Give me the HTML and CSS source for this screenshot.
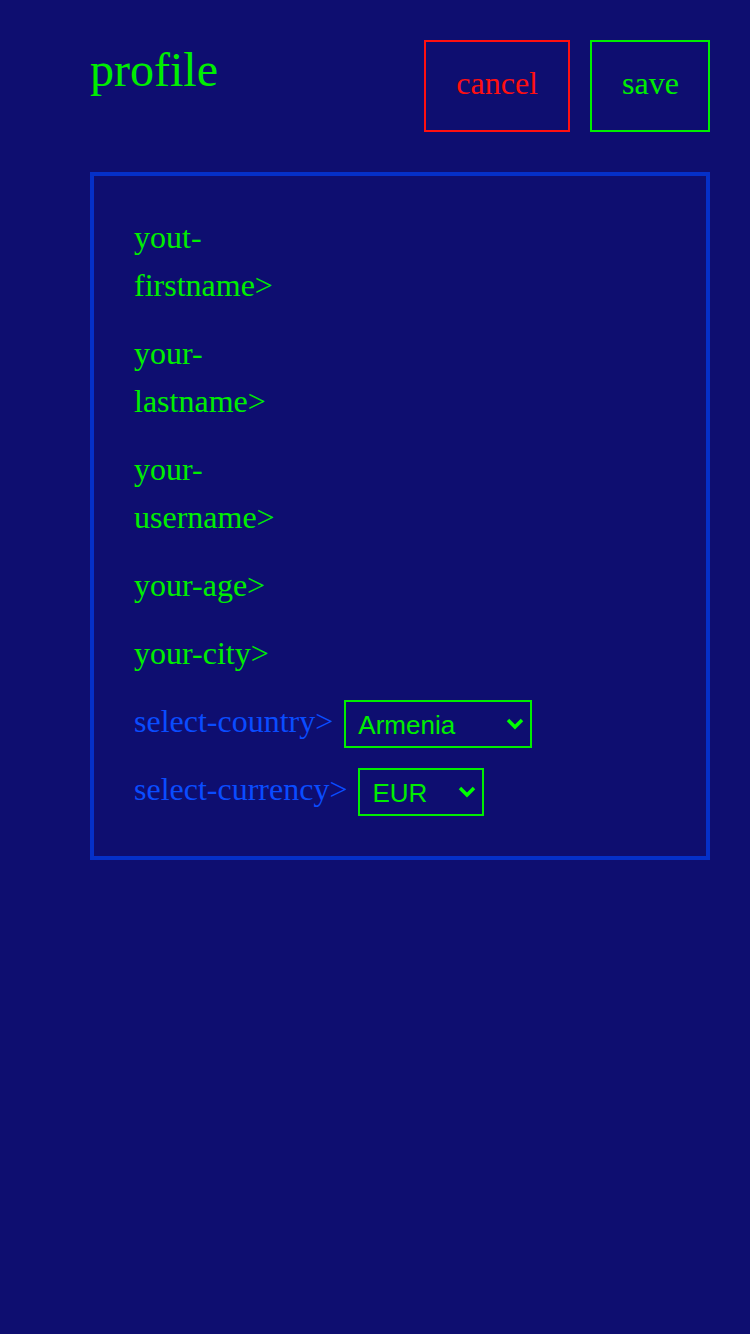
FILE: index.html
```html
<!DOCTYPE html>
<html>
<head>
<meta charset="utf-8">
<link rel="stylesheet" href="styles.css">
</head>
<body>
<div class="page">
  <header class="top">
    <h1 class="title">profile</h1>
    <div class="actions">
      <button class="btn btn-cancel">cancel</button>
      <button class="btn btn-save">save</button>
    </div>
  </header>
  <section class="card">
    <div class="row"><span class="label">yout-firstname&gt;</span></div>
    <div class="row"><span class="label">your-lastname&gt;</span></div>
    <div class="row"><span class="label">your-username&gt;</span></div>
    <div class="row"><span class="label">your-age&gt;</span></div>
    <div class="row"><span class="label">your-city&gt;</span></div>
    <div class="row select-row">
      <span class="label-blue">select-country&gt;</span>
      <div class="select select-country">
        <span class="select-value">Armenia</span>
        <svg class="chev" width="18" height="12" viewBox="0 0 18 12"><path d="M2 2 L9 9 L16 2" fill="none" stroke="#00ff00" stroke-width="3.5"/></svg>
      </div>
    </div>
    <div class="row select-row">
      <span class="label-blue">select-currency&gt;</span>
      <div class="select select-currency">
        <span class="select-value">EUR</span>
        <svg class="chev" width="18" height="12" viewBox="0 0 18 12"><path d="M2 2 L9 9 L16 2" fill="none" stroke="#00ff00" stroke-width="3.5"/></svg>
      </div>
    </div>
  </section>
</div>
</body>
</html>
```

FILE: styles.css
```css
html, body {
  margin: 0;
  padding: 0;
  background: #0e0e70;
}
body {
  font-family: "Liberation Serif", "Times New Roman", serif;
  min-height: 1334px;
}
.page {
  padding: 40px 40px 0 90px;
}
.top {
  display: flex;
  justify-content: space-between;
  align-items: flex-start;
}
.title {
  margin: 2px 0 0 0;
  font-size: 48px;
  font-weight: normal;
  color: #00ee00;
  line-height: normal;
}
.actions {
  display: flex;
  gap: 20px;
}
.btn {
  font-family: "Liberation Serif", "Times New Roman", serif;
  font-size: 32px;
  background: transparent;
  height: 92px;
  padding: 0 30px 6px 30px;
  margin: 0;
  line-height: 1;
}
.btn-cancel {
  color: #ff1010;
  border: 2px solid #ff1010;
}
.btn-save {
  color: #00ee00;
  border: 2px solid #00ee00;
  width: 120px;
}
.card {
  margin-top: 40px;
  border: 4px solid #0530c8;
  padding: 37px 40px 43px 40px;
  display: flex;
  flex-direction: column;
  gap: 20px;
}
.row {
  display: flex;
  align-items: flex-start;
  font-size: 32px;
  line-height: 48px;
}
.label {
  color: #00ee00;
  max-width: 150px;
}
.label-blue {
  color: #0a4cff;
}
.select-row {
  gap: 11px;
}
.select {
  box-sizing: border-box;
  height: 48px;
  border: 2px solid #00ee00;
  display: flex;
  align-items: center;
  justify-content: space-between;
  padding: 0 6px 0 12px;
  font-family: "Liberation Sans", Arial, sans-serif;
  font-size: 26px;
  color: #00ee00;
  margin-top: 3px;
  margin-bottom: -3px;
}
.select-value {
  line-height: 1;
  padding-top: 2px;
}
.select-country {
  width: 188px;
}
.select-currency {
  width: 126px;
}
.chev {
  display: block;
}
```
